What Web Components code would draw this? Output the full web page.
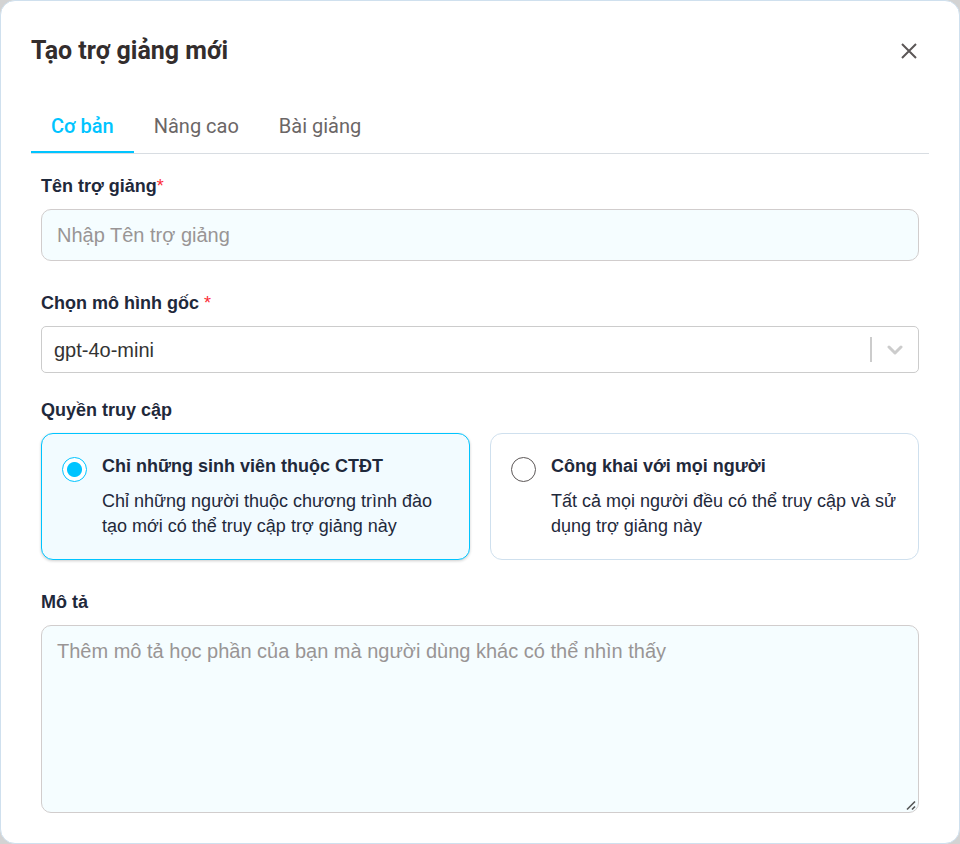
<!DOCTYPE html>
<html lang="vi">
<head>
<meta charset="utf-8">
<meta name="viewport" content="width=device-width, initial-scale=1">
<title>Tạo trợ giảng mới</title>
<style>
  html, body { height: 100%; }
  body {
    margin: 0;
    background: #d3d3d3;
    color: #1f293b;
    font-family: "Liberation Sans", Arial, sans-serif;
    --accent: #00c4ff;
    --line: #cfe0ee;
    --field-line: #d1cdcd;
    --field-bg: #f5fdff;
    --ui-font: Roboto, "Liberation Sans", sans-serif;
  }
</style>
</head>
<body>
<assistant-dialog heading="Tạo trợ giảng mới">
  <tab-strip slot="tabs" tabs="Cơ bản|Nâng cao|Bài giảng"></tab-strip>
  <text-field placeholder="Nhập Tên trợ giảng" required>Tên trợ giảng</text-field>
  <select-field options="gpt-4o-mini">Chọn mô hình gốc&nbsp;</select-field>
  <access-choice>
    Quyền truy cập
    <span slot="title-1">Chỉ những sinh viên thuộc CTĐT</span>
    <span slot="text-1">Chỉ những người thuộc chương trình đào tạo mới có thể truy cập trợ giảng này</span>
    <span slot="title-2">Công khai với mọi người</span>
    <span slot="text-2">Tất cả mọi người đều có thể truy cập và sử dụng trợ giảng này</span>
  </access-choice>
  <note-field placeholder="Thêm mô tả học phần của bạn mà người dùng khác có thể nhìn thấy">Mô tả</note-field>
</assistant-dialog>

<script>
const base = `
  * { box-sizing: border-box; }
  :host { display: block; }
  .label {
    display: block;
    padding: 0;
    margin: 0 0 10px;
    font-size: 18px;
    font-weight: 700;
    line-height: 26px;
  }
  .star { color: #fb2c36; font-weight: 400; }
  input, textarea, select, button { font: inherit; color: inherit; }
`;

class Base extends HTMLElement {
  connectedCallback() {
    if (this.shadowRoot) return;
    this.attachShadow({ mode: "open" }).innerHTML =
      `<style>${base}${this.styles()}</style>${this.markup()}`;
    this.ready();
  }
  ready() {}
}

customElements.define("assistant-dialog", class extends Base {
  styles() { return `
    :host { min-height: 100%; display: flex; }
    section {
      flex: 1;
      min-width: 0;
      padding: 30px;
      background: #fff;
      border: 1px solid var(--line);
      border-radius: 15px;
    }
    header { display: flex; align-items: center; justify-content: space-between; margin-bottom: 28px; }
    h1 { margin: 0; color: #332d2d; font: 700 25px/40px var(--ui-font); }
    button {
      display: grid; place-items: center;
      width: 40px; height: 40px; padding: 0;
      border: 0; background: none; color: #5c5757; cursor: pointer;
    }
    main { padding: 19px 10px 0; }
  `; }
  markup() { return `
    <section role="dialog" aria-labelledby="title">
      <header>
        <h1 id="title">${this.getAttribute("heading")}</h1>
        <button type="button" aria-label="Đóng">
          <svg width="16" height="16" viewBox="0 0 16 16" fill="none" stroke="currentColor" stroke-width="2"><path d="M1 1 15 15M15 1 1 15"/></svg>
        </button>
      </header>
      <slot name="tabs"></slot>
      <main><slot></slot></main>
    </section>
  `; }
});

customElements.define("tab-strip", class extends Base {
  styles() { return `
    nav { display: flex; border-bottom: 1px solid #d8dde2; }
    button {
      padding: 2px 20px 0;
      border: 0;
      border-bottom: 2px solid transparent;
      background: none;
      color: #6b6666;
      font: 400 20px/50px var(--ui-font);
      cursor: pointer;
    }
    button[aria-selected="true"] { color: var(--accent); border-color: var(--accent); font-weight: 500; }
  `; }
  markup() {
    return `<nav role="tablist">${this.getAttribute("tabs").split("|").map((name, i) =>
      `<button type="button" role="tab" aria-selected="${i === 0}">${name}</button>`).join("")}</nav>`;
  }
  ready() {
    const tabs = [...this.shadowRoot.querySelectorAll("button")];
    tabs.forEach(tab => tab.addEventListener("click", () =>
      tabs.forEach(t => t.setAttribute("aria-selected", t === tab))));
  }
});

const boxed = `
  border: 1px solid var(--field-line);
  border-radius: 10px;
  background: var(--field-bg);
  outline: none;
  font-size: 20px;
`;

customElements.define("text-field", class extends Base {
  styles() { return `
    :host { margin-bottom: 29px; }
    input { display: block; width: 100%; height: 52px; padding: 0 15px; ${boxed} }
    input::placeholder { color: #999595; opacity: 1; }
  `; }
  markup() { return `
    <label class="label" for="field"><slot></slot><span class="star">*</span></label>
    <input id="field" type="text" placeholder="${this.getAttribute("placeholder")}">
  `; }
});

customElements.define("select-field", class extends Base {
  styles() { return `
    :host { margin-bottom: 24px; }
    .box {
      display: grid;
      grid-template-columns: 1fr 2px 46px;
      align-items: center;
      height: 47px;
      border: 1px solid #ccc;
      border-radius: 5px;
      background: #fff;
    }
    select {
      grid-area: 1 / 1 / 2 / 4;
      width: 100%; height: 100%;
      padding: 0 60px 0 12px;
      appearance: none;
      border: 0; outline: none; background: none;
      color: #333; font-size: 20px;
    }
    i { grid-area: 1 / 2; height: 25px; background: #ccc; pointer-events: none; }
    svg { grid-area: 1 / 3; justify-self: center; pointer-events: none; }
  `; }
  markup() { return `
    <label class="label" for="field"><slot></slot><span class="star">*</span></label>
    <div class="box">
      <select id="field">${this.getAttribute("options").split("|").map(o => `<option>${o}</option>`).join("")}</select>
      <i></i>
      <svg width="16" height="10" viewBox="0 0 16 10" fill="none" stroke="#ccc" stroke-width="3" stroke-linecap="round" stroke-linejoin="round"><path d="M2 2 8 8 14 2"/></svg>
    </div>
  `; }
});

customElements.define("access-choice", class extends Base {
  styles() { return `
    :host { margin-bottom: 29px; }
    fieldset { min-width: 0; margin: 0; padding: 0; border: 0; }
    .cards { display: grid; grid-template-columns: 1fr 1fr; gap: 20px; }
    .card {
      display: flex; gap: 15px;
      padding: 20px;
      border: 1px solid var(--line);
      border-radius: 12px;
      font-size: 18px; line-height: 25px;
      cursor: pointer;
    }
    .card:has(:checked) { border-color: var(--accent); background: #f2fbff; box-shadow: 0 1px 3px rgb(0 0 0 / 20%); }
    input {
      appearance: none;
      flex: none;
      width: 25px; height: 25px;
      margin: 3px 0 0;
      border: 1px solid #5c5757;
      border-radius: 50%;
      background: #fff;
    }
    input:checked { border-color: var(--accent); background: radial-gradient(circle, var(--accent) 7px, #fff 8px); }
    b, .text { display: block; }
    b { margin-bottom: 10px; }
  `; }
  markup() {
    const card = n => `
      <label class="card">
        <input type="radio" name="access" ${n === 1 ? "checked" : ""}>
        <span><b><slot name="title-${n}"></slot></b><span class="text"><slot name="text-${n}"></slot></span></span>
      </label>`;
    return `
      <fieldset>
        <legend class="label"><slot></slot></legend>
        <div class="cards">${card(1)}${card(2)}</div>
      </fieldset>`;
  }
});

customElements.define("note-field", class extends Base {
  styles() { return `
    textarea { display: block; width: 100%; height: 188px; padding: 10px 15px; line-height: 30px; resize: vertical; ${boxed} }
    textarea::placeholder { color: #999595; opacity: 1; }
    textarea::-webkit-resizer {
      background: url("data:image/svg+xml,%3Csvg xmlns='http://www.w3.org/2000/svg' width='15' height='15' fill='none' stroke='%23555' stroke-width='1.6'%3E%3Cpath d='M4 12.5 12 4.5M9 12.5 12 9.5'/%3E%3C/svg%3E") right bottom no-repeat;
    }
  `; }
  markup() { return `
    <label class="label" for="field"><slot></slot></label>
    <textarea id="field" placeholder="${this.getAttribute("placeholder")}"></textarea>
  `; }
});
</script>
</body>
</html>
